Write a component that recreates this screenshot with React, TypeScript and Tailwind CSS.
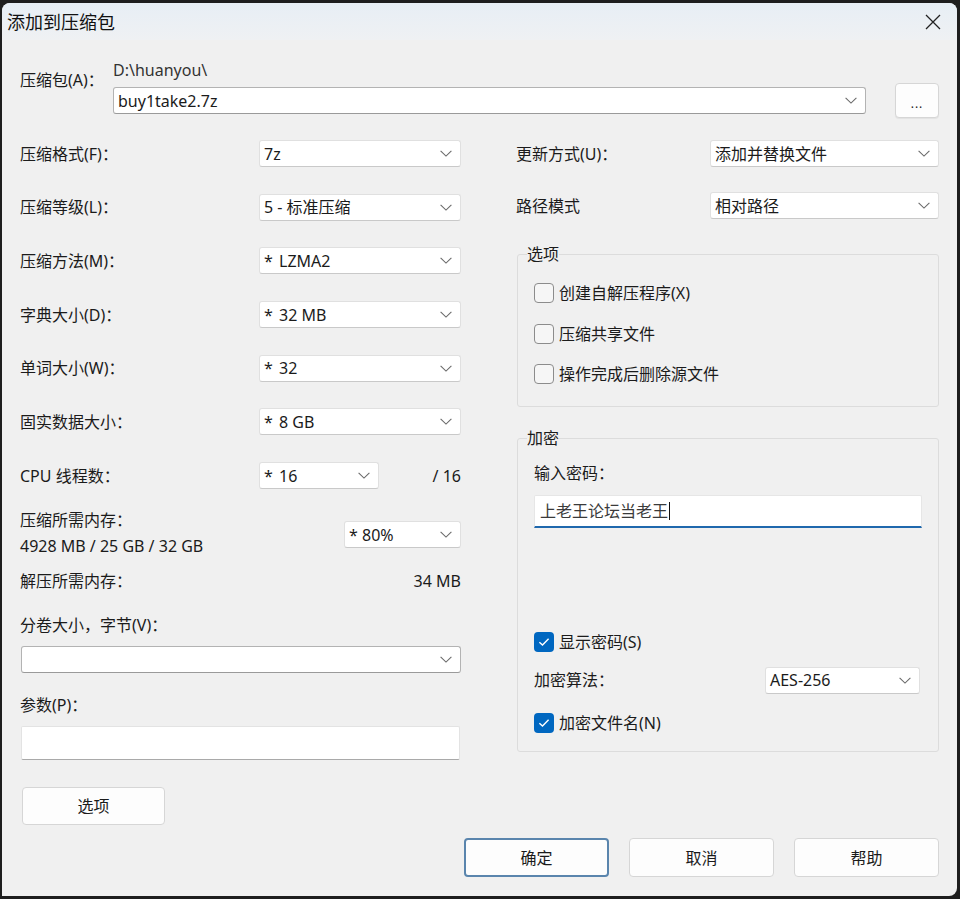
import React from "react";

const FONT = "font-['Noto_Sans','Noto_Sans_CJK_SC',sans-serif]";

function Chevron() {
  return (
    <svg width="12" height="7" viewBox="0 0 12 7" className="shrink-0">
      <path d="M0.6 0.8 L6 6.1 L11.4 0.8" fill="none" stroke="#6a6a6a" strokeWidth="1.1" />
    </svg>
  );
}

function Combo({
  children,
  className = "",
  editable = false,
}: {
  children?: React.ReactNode;
  className?: string;
  editable?: boolean;
}) {
  const border = editable
    ? "border border-[#b3b3b3] border-b-[#9a9a9a]"
    : "border border-[#e0e0e0] border-b-[#c9c9c9]";
  return (
    <div
      className={`flex h-[27px] items-center justify-between rounded-[3px] bg-white pl-[4px] pr-[8px] ${border} ${className}`}
    >
      <span className="flex items-center whitespace-pre">{children}</span>
      <Chevron />
    </div>
  );
}

function Star({ w = "w-[15px]" }: { w?: string }) {
  return <span className={`inline-block ${w}`}>*</span>;
}

function Check({ checked = false, label }: { checked?: boolean; label: string }) {
  return (
    <div className="flex h-[20px] items-center">
      {checked ? (
        <span className="flex h-[20px] w-[20px] shrink-0 items-center justify-center rounded-[4px] bg-[#0067c0]">
          <svg width="12" height="10" viewBox="0 0 12 10">
            <path d="M1.4 5.2 L4.5 8.1 L10.6 1.8" fill="none" stroke="white" strokeWidth="1.4" />
          </svg>
        </span>
      ) : (
        <span className="h-[20px] w-[20px] shrink-0 rounded-[4px] border border-[#8c8c8c] bg-[#f6f6f6]" />
      )}
      <span className="ml-[5px]">{label}</span>
    </div>
  );
}

function Button({ children, primary = false, className = "" }: { children: React.ReactNode; primary?: boolean; className?: string }) {
  const border = primary ? "border-2 border-[#5a85ad]" : "border border-[#d6d6d6]";
  return (
    <button
      className={`flex items-center justify-center rounded-[4px] bg-[#fdfdfd] text-[#1b1b1b] ${border} ${className}`}
    >
      {children}
    </button>
  );
}

const leftRows: { label: string; value: React.ReactNode }[] = [
  { label: "压缩格式(F)：", value: "7z" },
  { label: "压缩等级(L)：", value: "5 - 标准压缩" },
  {
    label: "压缩方法(M)：",
    value: (
      <>
        <Star />
        LZMA2
      </>
    ),
  },
  {
    label: "字典大小(D)：",
    value: (
      <>
        <Star />
        32 MB
      </>
    ),
  },
  {
    label: "单词大小(W)：",
    value: (
      <>
        <Star />
        32
      </>
    ),
  },
  {
    label: "固实数据大小：",
    value: (
      <>
        <Star />
        8 GB
      </>
    ),
  },
];

export default function App() {
  return (
    <div className={`h-[899px] w-[960px] bg-[#1e1e1e] pl-[2px] pt-[3px] ${FONT} text-[16px] leading-[20px] text-[#1b1b1b]`}>
      <div className="flex h-[893px] w-[955px] flex-col rounded-t-[8px] rounded-br-[8px] bg-[#f0f0f0]">
        {/* title bar */}
        <div className="flex h-[37px] items-center justify-between rounded-t-[8px] bg-linear-to-b from-[#e7eef5] to-[#eff1f3] pl-[5px] pr-[16px]">
          <span className="text-[18px] text-[#111]">添加到压缩包</span>
          <svg width="16" height="16" viewBox="0 0 16 16">
            <path d="M1 1 L15 15 M15 1 L1 15" stroke="#222" strokeWidth="1.3" />
          </svg>
        </div>

        <div className="flex flex-col px-[18px] pt-[20px]">
          {/* archive path */}
          <div className="flex">
            <span className="mt-[10px] w-[93px]">压缩包(A)：</span>
            <div className="flex flex-col">
              <span className="h-[20px] text-[#333]">D:\huanyou\</span>
              <div className="mt-[3px] flex h-[35px] items-start">
                <Combo editable className="mt-[4px] w-[753px]">
                  buy1take2.7z
                </Combo>
                <Button className="ml-[29px] h-[35px] w-[44px] shadow-[0_1px_1px_rgba(0,0,0,0.06)]">
                  <span className="mt-[6px] text-[12px] tracking-[1px]">...</span>
                </Button>
              </div>
            </div>
          </div>

          {/* settings */}
          <div className="mt-[22px] flex">
            {/* left column */}
            <div className="flex w-[441px] flex-col">
              <div className="flex flex-col gap-[26.7px]">
                {leftRows.map((r) => (
                  <div key={r.label} className="flex h-[27px] items-center">
                    <span className="w-[239px]">{r.label}</span>
                    <Combo className="w-[202px]">{r.value}</Combo>
                  </div>
                ))}
                <div className="flex h-[27px] items-center">
                  <span className="w-[239px]">CPU 线程数：</span>
                  <Combo className="w-[120px]">
                    <Star />
                    16
                  </Combo>
                  <span className="flex-1 text-right">/ 16</span>
                </div>
              </div>

              <div className="mt-[21px] flex justify-between">
                <div className="flex flex-col gap-[6px]">
                  <span>压缩所需内存：</span>
                  <span>4928 MB / 25 GB / 32 GB</span>
                </div>
                <Combo className="mt-[11px] w-[117px]">
                  <Star w="w-[13px]" />
                  80%
                </Combo>
              </div>

              <div className="mt-[15px] flex justify-between">
                <span>解压所需内存：</span>
                <span>34 MB</span>
              </div>

              <span className="mt-[24px]">分卷大小，字节(V)：</span>
              <Combo editable className="mt-[11px] ml-[1px] w-[440px]" />

              <span className="mt-[22px]">参数(P)：</span>
              <div className="mt-[11px] ml-[1px] h-[34px] w-[439px] rounded-[2px] border border-[#e3e3e3] border-b-[#a9a9a9] bg-white" />

              <Button className="mt-[27px] ml-[2px] h-[38px] w-[143px]">选项</Button>
            </div>

            {/* right column */}
            <div className="ml-[55px] flex w-[423px] flex-col">
              <div className="flex h-[27px] items-center">
                <span className="w-[194px]">更新方式(U)：</span>
                <Combo className="w-[229px]">添加并替换文件</Combo>
              </div>
              <div className="mt-[25px] flex h-[27px] items-center">
                <span className="w-[194px]">路径模式</span>
                <Combo className="w-[229px]">相对路径</Combo>
              </div>

              <fieldset className="ml-[1px] mt-[25px] rounded-[3px] border border-[#dcdcdc] p-0">
                <legend className="ml-[9px] p-0 leading-[20px]">选项</legend>
                <div className="flex flex-col gap-[20.5px] px-[16px] pb-[22px] pt-[19px]">
                  <Check label="创建自解压程序(X)" />
                  <Check label="压缩共享文件" />
                  <Check label="操作完成后删除源文件" />
                </div>
              </fieldset>

              <fieldset className="ml-[1px] mt-[21px] rounded-[3px] border border-[#dcdcdc] p-0">
                <legend className="ml-[9px] p-0 leading-[20px]">加密</legend>
                <div className="flex flex-col px-[16px] pb-[18px] pt-[15px]">
                  <span>输入密码：</span>
                  <div className="mt-[12px] flex h-[33px] items-center rounded-t-[2px] border border-[#e6e6e6] border-b-2 border-b-[#1f68ad] bg-white pl-[5px] text-[#3a3a3a]">
                    上老王论坛当老王
                    <span className="ml-[1px] inline-block h-[18px] w-px bg-[#111]" />
                  </div>
                  <div className="mt-[104px]">
                    <Check checked label="显示密码(S)" />
                  </div>
                  <div className="mt-[15px] flex h-[26px] items-center">
                    <span className="w-[231px]">加密算法：</span>
                    <Combo className="h-[26px] w-[155px]">AES-256</Combo>
                  </div>
                  <div className="mt-[20px]">
                    <Check checked label="加密文件名(N)" />
                  </div>
                </div>
              </fieldset>
            </div>
          </div>

          {/* dialog buttons */}
          <div className="mt-[13px] flex justify-end gap-[20px]">
            <Button primary className="h-[39px] w-[145px]">确定</Button>
            <Button className="h-[39px] w-[145px]">取消</Button>
            <Button className="h-[39px] w-[145px]">帮助</Button>
          </div>
        </div>
      </div>
    </div>
  );
}
